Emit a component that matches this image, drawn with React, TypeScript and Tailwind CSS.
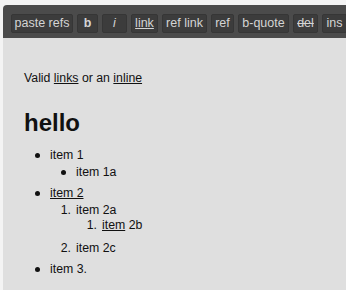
const buttons = [
  { label: "paste refs", w: "w-[62px]", cls: "" },
  { label: "b", w: "w-[21px]", cls: "font-bold" },
  { label: "i", w: "w-[25px]", cls: "italic" },
  { label: "link", w: "w-[27px]", cls: "underline" },
  { label: "ref link", w: "w-[45px]", cls: "" },
  { label: "ref", w: "w-[23px]", cls: "" },
  { label: "b-quote", w: "w-[51px]", cls: "" },
  { label: "del", w: "w-[25px]", cls: "line-through" },
  { label: "ins", w: "w-[25px]", cls: "" },
];

const Bullet = () => (
  <span className="flex w-[26px] shrink-0 items-center pl-[11px]">
    <span className="h-[5px] w-[5px] rounded-full bg-[#111]" />
  </span>
);

const Num = ({ n }: { n: number }) => (
  <span className="w-[26px] shrink-0 pr-[5px] text-right">{n}.</span>
);

export default function App() {
  return (
    <div
      className="h-[290px] w-[346px] overflow-hidden bg-[#f4f4f4] pl-[3px] pt-[5px] text-[#111]"
      style={{ fontFamily: '"Liberation Sans", Arial, sans-serif' }}
    >
      <div className="flex h-[33px] w-[400px] gap-[4px] rounded-tl-[4px] bg-[#4b4b4b] pl-[8px] pt-[9px]">
        {buttons.map((b) => (
          <div
            key={b.label}
            className={`flex h-[19px] ${b.w} shrink-0 items-center justify-center rounded-[2px] border border-[#363636] bg-[#3c3c3c] text-[12.5px] text-[#d4d4d4]`}
          >
            <span className={b.cls}>{b.label}</span>
          </div>
        ))}
      </div>
      <div className="h-full bg-[#dfdfdf] pl-[21px] pt-[33px] text-[12.3px] leading-[15px]">
        <p>
          Valid <span className="underline">links</span> or an <span className="underline">inline</span>
        </p>
        <h1 className="mt-[22px] text-[24px] font-bold leading-[30px]">hello</h1>
        <div className="mt-[10px]">
          <div className="flex">
            <Bullet />
            <span>item 1</span>
          </div>
          <div className="mt-[2px] flex pl-[26px]">
            <Bullet />
            <span>item 1a</span>
          </div>
          <div className="mt-[6px] flex">
            <Bullet />
            <span className="underline">item 2</span>
          </div>
          <div className="mt-[2px] flex pl-[26px]">
            <Num n={1} />
            <span>item 2a</span>
          </div>
          <div className="flex pl-[52px]">
            <Num n={1} />
            <span>
              <span className="underline">item</span> 2b
            </span>
          </div>
          <div className="mt-[8px] flex pl-[26px]">
            <Num n={2} />
            <span>item 2c</span>
          </div>
          <div className="mt-[6px] flex">
            <Bullet />
            <span>item 3.</span>
          </div>
        </div>
      </div>
    </div>
  );
}
